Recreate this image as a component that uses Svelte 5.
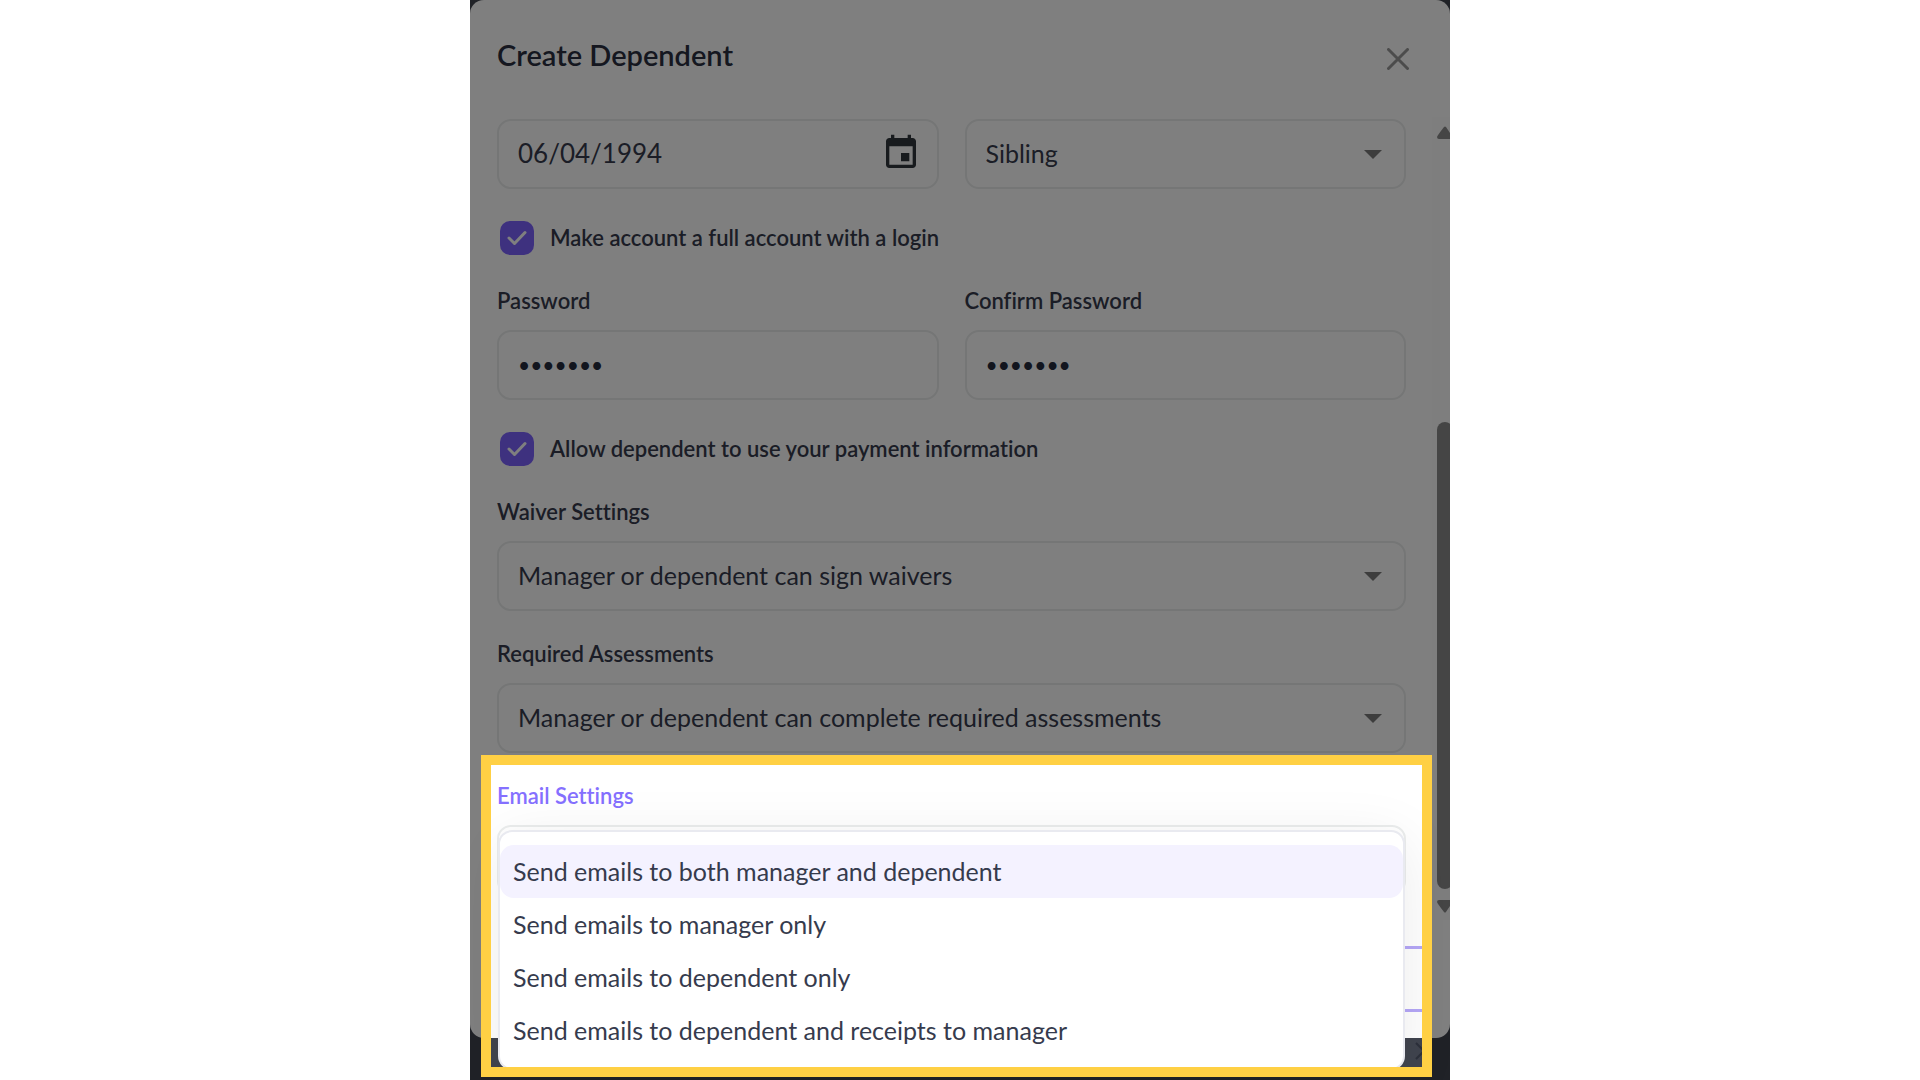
<!-- CreateDependent dialog -->
<script>
  let birthDate = '06/04/1994';
  let relation = 'Sibling';
  let fullAccount = true;
  let password = 'secret1';
  let confirmPassword = 'secret1';
  let sharePayment = true;
  let waiver = 'Manager or dependent can sign waivers';
  let assessments = 'Manager or dependent can complete required assessments';

  const emailOptions = [
    'Send emails to both manager and dependent',
    'Send emails to manager only',
    'Send emails to dependent only',
    'Send emails to dependent and receipts to manager'
  ];
  let emailSetting = emailOptions[0];
</script>

{#snippet caret()}
  <svg class="caret" viewBox="0 0 18 9" aria-hidden="true"><path d="M0 0h18L9 9z" /></svg>
{/snippet}

{#snippet tick()}
  <svg class="tick" viewBox="0 0 34 34" aria-hidden="true"><path d="M9 17l5.500 5.500L25 11.500" /></svg>
{/snippet}

<main class="stage">
  <svg class="next" viewBox="0 0 10 18" aria-hidden="true"><path d="M1 1l8 8-8 8" /></svg>

  <div class="dialog" role="dialog" aria-labelledby="title">
    <header>
      <h1 id="title">Create Dependent</h1>
      <button class="close" type="button" aria-label="Close">
        <svg viewBox="0 0 22 22"><path d="M1.500 1.500l19 19M20.500 1.500l-19 19" /></svg>
      </button>
    </header>

    <div class="body">
      <form>
        <div class="row">
          <div class="control">
            <input class="date" type="text" aria-label="Date of birth" bind:value={birthDate} />
            <svg class="calendar" viewBox="0 0 24 24" aria-hidden="true">
              <path d="M17 12h-5v5h5v-5zM16 1v2H8V1H6v2H5c-1.110 0-1.990.9-1.990 2L3 19c0 1.100.890 2 2 2h14c1.100 0 2-.9 2-2V5c0-1.100-.9-2-2-2h-1V1h-2zm3 18H5V8h14v11z" />
            </svg>
          </div>
          <div class="control">
            <select aria-label="Relation" bind:value={relation}>
              <option>Sibling</option>
            </select>
            {@render caret()}
          </div>
        </div>

        <label class="check">
          <span class="box"><input type="checkbox" bind:checked={fullAccount} />{@render tick()}</span>
          Make account a full account with a login
        </label>

        <div class="row">
          <div class="field">
            <label for="password">Password</label>
            <input id="password" type="password" bind:value={password} />
          </div>
          <div class="field">
            <label for="confirm">Confirm Password</label>
            <input id="confirm" type="password" bind:value={confirmPassword} />
          </div>
        </div>

        <label class="check">
          <span class="box"><input type="checkbox" bind:checked={sharePayment} />{@render tick()}</span>
          Allow dependent to use your payment information
        </label>

        <div class="settings">
          <div class="field">
            <label for="waiver">Waiver Settings</label>
            <div class="control">
              <select id="waiver" bind:value={waiver}>
                <option>Manager or dependent can sign waivers</option>
              </select>
              {@render caret()}
            </div>
          </div>

          <div class="field">
            <label for="assessments">Required Assessments</label>
            <div class="control">
              <select id="assessments" bind:value={assessments}>
                <option>Manager or dependent can complete required assessments</option>
              </select>
              {@render caret()}
            </div>
          </div>

          <div class="field email">
            <label for="email">Email Settings</label>
            <select id="email" bind:value={emailSetting}>
              {#each emailOptions as option}
                <option>{option}</option>
              {/each}
            </select>
            <div class="menu" role="listbox" aria-label="Email Settings">
              {#each emailOptions as option}
                <button
                  type="button"
                  role="option"
                  aria-selected={option === emailSetting}
                  class:selected={option === emailSetting}
                  onclick={() => (emailSetting = option)}
                >{option}</button>
              {/each}
            </div>
            <div class="spotlight"></div>
          </div>
        </div>
      </form>

      <div class="scrollbar" aria-hidden="true">
        <svg viewBox="0 0 13 13"><path d="M0 11q0-1 7-10 1-1 2 0 6 9 7 10 0 2-2 2H2q-2 0-2-2z" /></svg>
        <div class="thumb"></div>
        <svg viewBox="0 0 13 13"><path d="M0 2q0 1 7 10 1 1 2 0 6-9 7-10 0-2-2-2H2Q0 0 0 2z" /></svg>
      </div>
    </div>

    <footer>
      <button class="save" type="button" aria-label="Save"></button>
    </footer>
  </div>
</main>

<style>
  :global(body) {
    background: #fff;
  }
  .stage {
    position: relative;
    max-width: 980px;
    height: 100vh;
    margin: 0 auto;
    overflow: hidden;
    background: #40444e;
    color: #363b4d;
    font-family: Lato, "Liberation Sans", sans-serif;
    font-size: 25px;
    font-variant-ligatures: none;
  }
  .dialog {
    background: #fff;
    border-radius: 14px;
  }
  header {
    display: flex;
    align-items: center;
    justify-content: space-between;
    height: 117px;
    padding: 0 41px 8px 27px;
    box-sizing: border-box;
  }
  h1 {
    margin: 0;
    color: #2a2f40;
    font-size: 29px;
    font-weight: 600;
    line-height: 36px;
  }
  button {
    font: inherit;
    color: inherit;
  }
  .close {
    display: flex;
    padding: 0;
    border: 0;
    background: none;
  }
  .close svg {
    width: 22px;
    height: 22px;
    margin-top: 8px;
    fill: none;
    stroke: #999;
    stroke-width: 3;
    stroke-linecap: round;
  }
  .body {
    display: flex;
  }
  form {
    flex: 1;
    padding: 2px 26px 25px 27px;
  }
  .row {
    display: grid;
    grid-template-columns: 1fr 1fr;
    gap: 26px;
  }
  .field {
    display: flex;
    flex-direction: column;
    gap: 15px;
  }
  .field label,
  .check {
    font-size: 22px;
    font-weight: 600;
    line-height: 28px;
  }
  .control {
    position: relative;
  }
  input:not([type='checkbox']),
  select {
    display: block;
    width: 100%;
    height: 70px;
    padding: 0 19px 2px;
    border: 2px solid #ebeded;
    border-radius: 14px;
    box-sizing: border-box;
    appearance: none;
    background: #fff;
    color: inherit;
    font: inherit;
    outline: none;
  }
  input.date {
    font-size: 26px;
  }
  input[type='password'] {
    color: #242a3c;
    font-size: 21px;
  }
  .caret {
    position: absolute;
    top: 31px;
    right: 24px;
    width: 18px;
    height: 9px;
    fill: #7a7a7a;
  }
  .calendar {
    position: absolute;
    top: 14px;
    right: 18px;
    width: 40px;
    height: 40px;
    fill: #30363c;
  }
  .check {
    display: flex;
    align-items: center;
    gap: 16px;
    height: 34px;
    margin: 32px 0;
    padding-left: 3px;
  }
  .box {
    display: grid;
    width: 34px;
    height: 34px;
  }
  .box > :global(*) {
    grid-area: 1 / 1;
  }
  .box input {
    width: 34px;
    height: 34px;
    margin: 0;
    border-radius: 10px;
    appearance: none;
    background: #7c62ff;
  }
  .tick {
    fill: none;
    stroke: #fff;
    stroke-width: 3;
    stroke-linecap: round;
    stroke-linejoin: round;
    pointer-events: none;
  }
  .settings {
    display: flex;
    flex-direction: column;
    gap: 29px;
  }
  .email {
    position: relative;
  }
  .email label {
    color: #8570ff;
  }
  .menu {
    position: absolute;
    top: 48px;
    left: 1px;
    right: 1px;
    z-index: 1;
    padding: 13px 0 11px;
    border: 2px solid #e9eaf0;
    border-radius: 14px;
    background: #fff;
    box-shadow: 0 10px 60px rgba(0, 0, 0, 0.08);
  }
  .menu button {
    display: block;
    width: 100%;
    height: 53px;
    padding: 0 13px 2px;
    border: 0;
    border-radius: 14px;
    background: none;
    text-align: left;
  }
  .menu .selected {
    background: #f4f2ff;
  }
  /* dims everything in the stage except the email field */
  .spotlight {
    position: absolute;
    top: -27px;
    left: -16px;
    right: -26px;
    z-index: 2;
    height: 302px;
    border: 10px solid #ffd044;
    box-shadow: 0 0 0 2000px rgba(0, 0, 0, 0.5);
    pointer-events: none;
  }
  .scrollbar {
    display: flex;
    flex-direction: column;
    width: 13px;
    padding: 9px 0 7px 5px;
    overflow: hidden;
    background: #fcfcfc;
  }
  .scrollbar svg {
    width: 13px;
    height: 13px;
    fill: #8b8b8b;
  }
  .thumb {
    width: 16px;
    height: 467px;
    margin: auto 0 11px;
    border-radius: 8px;
    background: #8b8b8b;
  }
  footer {
    display: flex;
    justify-content: flex-end;
    padding: 26px 20px 26px 27px;
  }
  .save {
    width: 260px;
    height: 66px;
    border: 3px solid #b5a7f7;
    border-radius: 8px;
    background: #fff;
  }
  .next {
    position: absolute;
    right: 25px;
    bottom: 20px;
    width: 10px;
    height: 18px;
    fill: none;
    stroke: #2c303b;
    stroke-width: 2;
  }
</style>
